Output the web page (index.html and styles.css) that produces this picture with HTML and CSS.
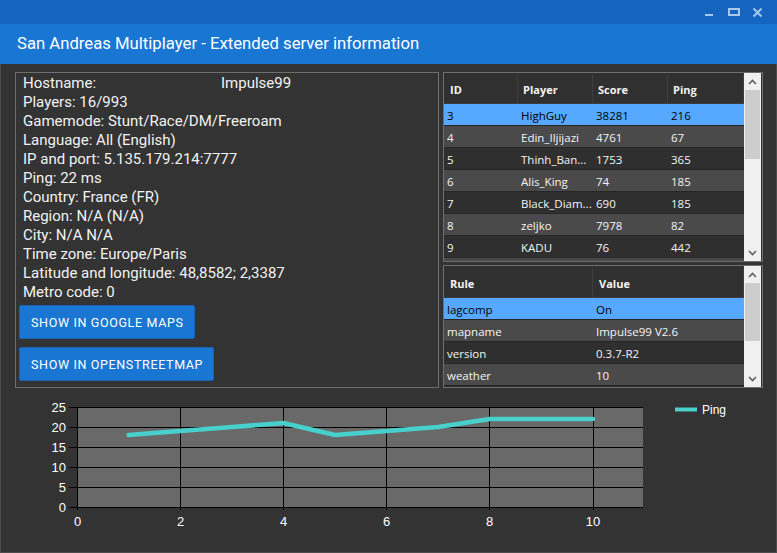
FILE: index.html
```html
<!DOCTYPE html>
<html>
<head>
<meta charset="utf-8">
<link rel="stylesheet" href="styles.css">
</head>
<body>
<div class="window">
  <div class="titlebar">
    <svg class="controls" width="72" height="24" viewBox="0 0 72 24">
      <g stroke="#a9c6ec" stroke-width="2" fill="none">
        <line x1="5" y1="15" x2="13" y2="15"/>
        <rect x="29" y="9" width="10" height="6"/>
        <path d="M53.5 8.5 L61.5 16.5 M61.5 8.5 L53.5 16.5"/>
      </g>
    </svg>
  </div>
  <div class="header">San Andreas Multiplayer - Extended server information</div>
  <div class="content">
    <div class="top">
      <div class="info">
        <div class="lines">
          <div class="line"><span class="key">Hostname:</span>Impulse99</div>
          <div class="line">Players: 16/993</div>
          <div class="line">Gamemode: Stunt/Race/DM/Freeroam</div>
          <div class="line">Language: All (English)</div>
          <div class="line">IP and port: 5.135.179.214:7777</div>
          <div class="line">Ping: 22 ms</div>
          <div class="line">Country: France (FR)</div>
          <div class="line">Region: N/A (N/A)</div>
          <div class="line">City: N/A N/A</div>
          <div class="line">Time zone: Europe/Paris</div>
          <div class="line">Latitude and longitude: 48,8582; 2,3387</div>
          <div class="line">Metro code: 0</div>
        </div>
        <div class="buttons">
          <button class="btn">SHOW IN GOOGLE MAPS</button>
          <button class="btn">SHOW IN OPENSTREETMAP</button>
        </div>
      </div>
      <div class="side">
        <div class="grid players">
          <div class="grid-body">
            <div class="row head">
              <div class="c c1">ID</div><div class="c c2">Player</div><div class="c c3">Score</div><div class="c c4">Ping</div>
            </div>
            <div class="row sel"><div class="c c1">3</div><div class="c c2">HighGuy</div><div class="c c3">38281</div><div class="c c4">216</div></div>
            <div class="row alt"><div class="c c1">4</div><div class="c c2">Edin_Iljijazi</div><div class="c c3">4761</div><div class="c c4">67</div></div>
            <div class="row"><div class="c c1">5</div><div class="c c2">Thinh_Ban...</div><div class="c c3">1753</div><div class="c c4">365</div></div>
            <div class="row alt"><div class="c c1">6</div><div class="c c2">Alis_King</div><div class="c c3">74</div><div class="c c4">185</div></div>
            <div class="row"><div class="c c1">7</div><div class="c c2">Black_Diam...</div><div class="c c3">690</div><div class="c c4">185</div></div>
            <div class="row alt"><div class="c c1">8</div><div class="c c2">zeljko</div><div class="c c3">7978</div><div class="c c4">82</div></div>
            <div class="row"><div class="c c1">9</div><div class="c c2">KADU</div><div class="c c3">76</div><div class="c c4">442</div></div>
            <div class="row alt"></div>
          </div>
          <div class="scroll">
            <div class="arrow"><svg width="9" height="6" viewBox="0 0 9 6"><path d="M1 5 L4.5 1.5 L8 5" stroke="#606060" stroke-width="1.6" fill="none"/></svg></div>
            <div class="track"><div class="thumb t1"></div></div>
            <div class="arrow"><svg width="9" height="6" viewBox="0 0 9 6"><path d="M1 1 L4.5 4.5 L8 1" stroke="#606060" stroke-width="1.6" fill="none"/></svg></div>
          </div>
        </div>
        <div class="grid rules">
          <div class="grid-body">
            <div class="row head rhead">
              <div class="c r1">Rule</div><div class="c r2">Value</div>
            </div>
            <div class="row sel"><div class="c r1">lagcomp</div><div class="c r2">On</div></div>
            <div class="row alt"><div class="c r1">mapname</div><div class="c r2">Impulse99 V2.6</div></div>
            <div class="row"><div class="c r1">version</div><div class="c r2">0.3.7-R2</div></div>
            <div class="row alt"><div class="c r1">weather</div><div class="c r2">10</div></div>
            <div class="row"></div>
          </div>
          <div class="scroll">
            <div class="arrow"><svg width="9" height="6" viewBox="0 0 9 6"><path d="M1 5 L4.5 1.5 L8 5" stroke="#606060" stroke-width="1.6" fill="none"/></svg></div>
            <div class="track"><div class="thumb t2"></div></div>
            <div class="arrow"><svg width="9" height="6" viewBox="0 0 9 6"><path d="M1 1 L4.5 4.5 L8 1" stroke="#606060" stroke-width="1.6" fill="none"/></svg></div>
          </div>
        </div>
      </div>
    </div>
    <svg class="chart" width="775" height="164" viewBox="1 388 775 164">
      <rect x="77" y="407" width="566" height="100" fill="#696969"/>
      <g stroke="#000" stroke-width="1" shape-rendering="crispEdges">
        <line x1="69" y1="407.5" x2="643" y2="407.5"/>
        <line x1="69" y1="427.5" x2="643" y2="427.5"/>
        <line x1="69" y1="447.5" x2="643" y2="447.5"/>
        <line x1="69" y1="467.5" x2="643" y2="467.5"/>
        <line x1="69" y1="487.5" x2="643" y2="487.5"/>
        <line x1="69" y1="507.5" x2="643" y2="507.5"/>
        <line x1="77.5" y1="407" x2="77.5" y2="510"/>
        <line x1="180.5" y1="407" x2="180.5" y2="510"/>
        <line x1="283.5" y1="407" x2="283.5" y2="510"/>
        <line x1="386.5" y1="407" x2="386.5" y2="510"/>
        <line x1="489.5" y1="407" x2="489.5" y2="510"/>
        <line x1="593.5" y1="407" x2="593.5" y2="510"/>
      </g>
      <polyline points="128.6,435 180.2,431 231.8,427 283.4,423 335,435 386.6,431 438.2,427 489.8,419 541.4,419 593,419" fill="none" stroke="#48d1cc" stroke-width="4.5" stroke-linejoin="round" stroke-linecap="round"/>
      <g class="ylab" text-anchor="end">
        <text x="66" y="412">25</text>
        <text x="66" y="432">20</text>
        <text x="66" y="452">15</text>
        <text x="66" y="472">10</text>
        <text x="66" y="492">5</text>
        <text x="66" y="512">0</text>
      </g>
      <g class="xlab" text-anchor="middle">
        <text x="77.5" y="526">0</text>
        <text x="180.5" y="526">2</text>
        <text x="283.5" y="526">4</text>
        <text x="386.5" y="526">6</text>
        <text x="489.5" y="526">8</text>
        <text x="593" y="526">10</text>
      </g>
      <line x1="675" y1="409.5" x2="697" y2="409.5" stroke="#48d1cc" stroke-width="4"/>
      <text class="legend" x="702" y="414">Ping</text>
    </svg>
  </div>
</div>
</body>
</html>
```

FILE: styles.css
```css
html, body {
  margin: 0;
  padding: 0;
  background: #333333;
}
.window {
  width: 777px;
  height: 553px;
  display: flex;
  flex-direction: column;
  overflow: hidden;
}
.titlebar {
  height: 24px;
  background: #1565c0;
  display: flex;
  justify-content: flex-end;
  padding-right: 5px;
}
.controls {
  display: block;
}
.header {
  height: 40px;
  background: #1976d2;
  color: #ffffff;
  font-family: Roboto, "Noto Sans", sans-serif;
  font-size: 16.7px;
  line-height: 40px;
  padding-left: 17px;
  white-space: nowrap;
}
.content {
  flex: 1;
  background: #333333;
  border: 1px solid #4c4c4c;
  border-top: none;
  display: flex;
  flex-direction: column;
  min-height: 0;
}
.top {
  display: flex;
  gap: 4px;
  padding: 8px 0 0 14px;
  height: 316px;
}
.info {
  width: 424px;
  height: 316px;
  box-sizing: border-box;
  border: 1px solid #6e6e6e;
  padding: 1px 0 6px 3px;
  display: flex;
  flex-direction: column;
}
.lines {
  padding-left: 4px;
  font-family: Roboto, "Noto Sans", sans-serif;
  font-size: 15px;
  line-height: 19px;
  color: #f2f2f2;
  white-space: nowrap;
}
.key {
  display: inline-block;
  width: 198px;
}
.buttons {
  display: flex;
  flex-direction: column;
  align-items: flex-start;
  gap: 8px;
  margin-top: 3px;
}
.btn {
  height: 34px;
  margin: 0;
  padding: 0 10px 0 11px;
  background: #1976d2;
  border: 1px solid #1a62b4;
  border-radius: 2px;
  color: #ffffff;
  font-family: Roboto, "Noto Sans", sans-serif;
  font-weight: 400;
  font-size: 12.5px;
  letter-spacing: 0.65px;
}
.side {
  width: 320px;
  display: flex;
  flex-direction: column;
  gap: 3px;
}
.grid {
  border: 1px solid #6e6e6e;
  display: flex;
  overflow: hidden;
  box-sizing: border-box;
}
.players { height: 190px; }
.rules { height: 123px; }
.grid-body {
  width: 300px;
  overflow: hidden;
  font-family: "Open Sans", "Noto Sans", sans-serif;
  font-size: 11.5px;
  color: #f4f4f4;
}
.row {
  display: flex;
  height: 22px;
  align-items: center;
  background: #2f2f2f;
  box-shadow: inset 0 -1px 0 #262626;
  white-space: nowrap;
}
.row.alt { background: #4a4a4a; }
.row.sel { background: #56a9ff; color: #000000; }
.row.head {
  height: 31px;
  background: #303030;
  font-weight: 700;
  font-size: 11px;
  padding-top: 2px;
  box-sizing: border-box;
  box-shadow: inset 0 -1px 0 #3c3c3c;
}
.row.rhead { height: 32px; }
.c {
  padding-left: 3px;
  box-sizing: border-box;
  overflow: hidden;
  height: 100%;
  display: flex;
  align-items: center;
}
.head .c {
  padding-left: 6px;
  border-right: 1px solid #3e3e3e;
}
.c1 { width: 74px; }
.c2 { width: 75px; }
.c3 { width: 75px; }
.c4 { width: 76px; }
.r1 { width: 149px; }
.r2 { width: 151px; }
.head .c2, .head .c3, .head .c4 { padding-left: 5px; }
.scroll {
  width: 17px;
  background: #f0f0f0;
  display: flex;
  flex-direction: column;
}
.arrow {
  height: 17px;
  display: flex;
  align-items: center;
  justify-content: center;
  flex: none;
}
.arrow svg { display: block; }
.track {
  flex: 1;
  padding: 0 1px;
}
.thumb {
  background: #cdcdcd;
}
.t1 { height: 69px; }
.t2 { height: 58px; }
.chart {
  display: block;
}
.ylab text, .xlab text {
  font-family: "Liberation Sans", Arial, sans-serif;
  font-size: 13px;
  fill: #ffffff;
}
.legend {
  font-family: "Liberation Sans", Arial, sans-serif;
  font-size: 12px;
  fill: #ffffff;
}
```
